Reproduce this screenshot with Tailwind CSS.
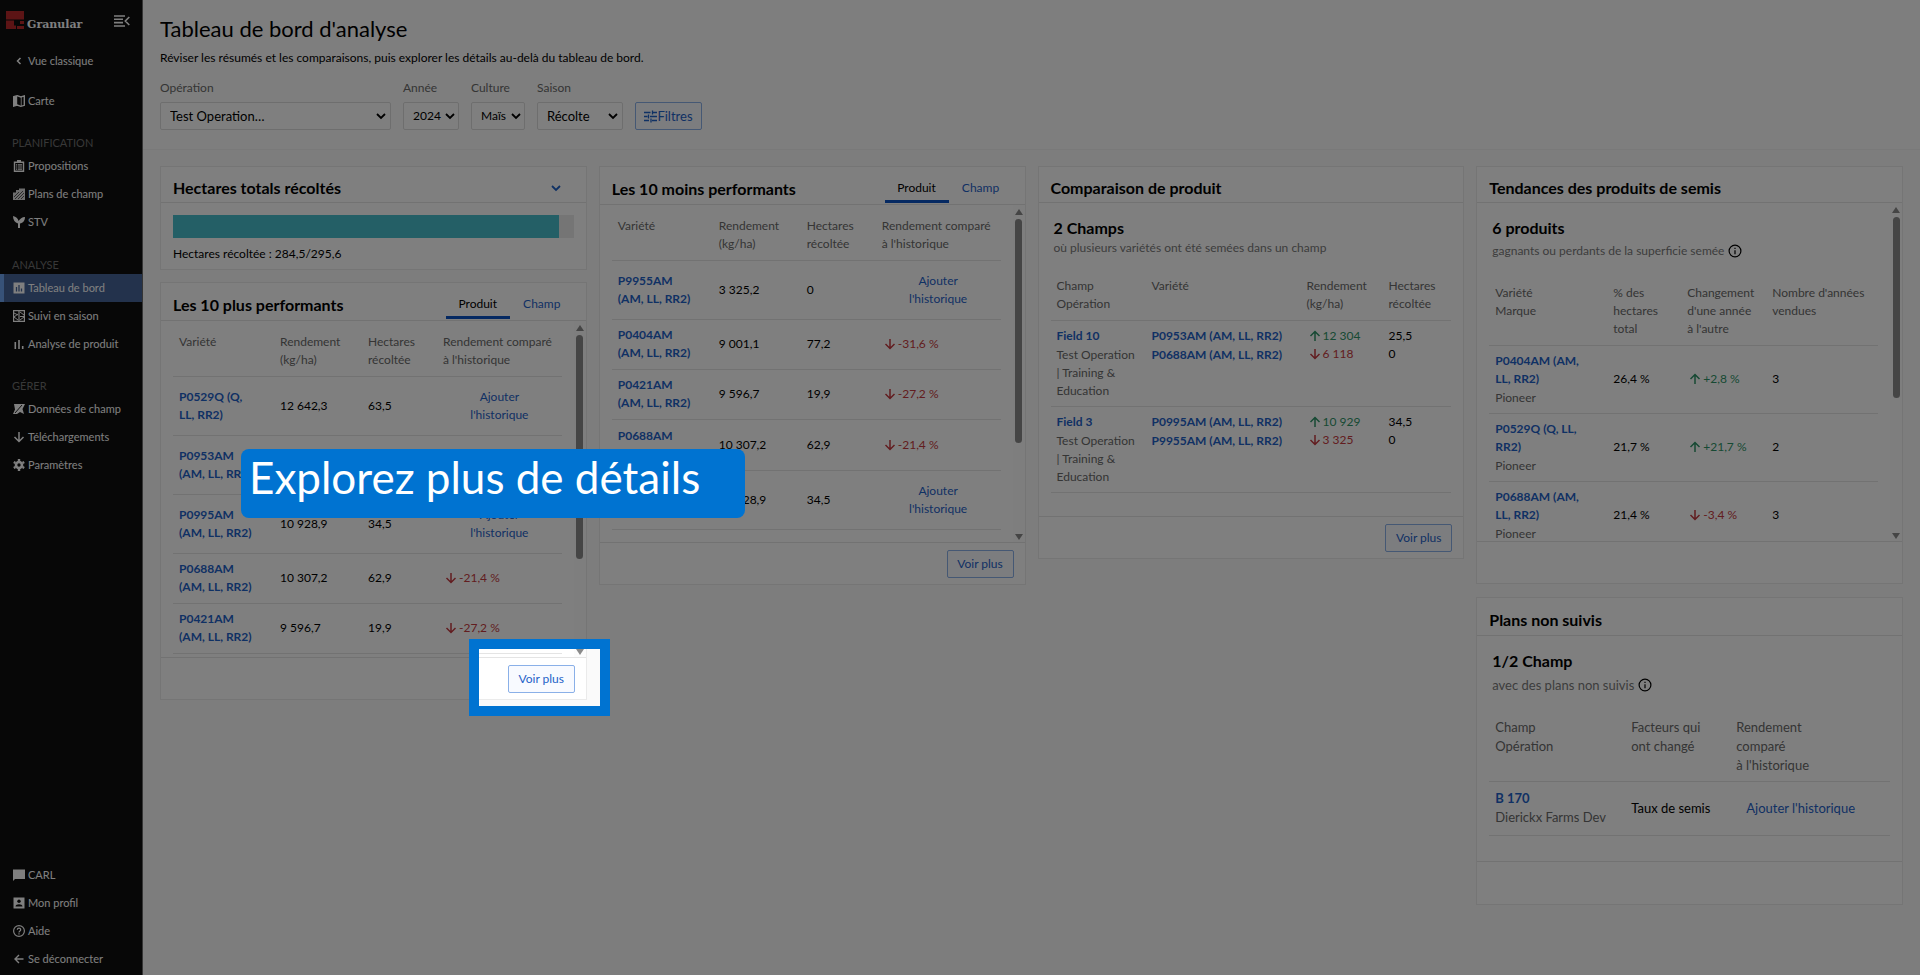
<!DOCTYPE html>
<html lang="fr">
<head>
  <meta charset="UTF-8">
  <title>Tableau de bord d'analyse</title>
  <script src="https://cdn.jsdelivr.net/npm/@tailwindcss/browser@4"></script>
</head>
<body class="bg-[#fafafa] font-['Lato','Open_Sans',sans-serif] text-[12px] leading-[18px] text-black">
  <svg class="hidden">
    <symbol id="up" viewBox="0 0 12 12"><path d="M6 11V1.5M1.5 6L6 1.5 10.500 6" fill="none" stroke="currentColor" stroke-width="1.5"/></symbol>
    <symbol id="down" viewBox="0 0 12 12"><path d="M6 1v9.500M1.500 6L6 10.500 10.500 6" fill="none" stroke="currentColor" stroke-width="1.5"/></symbol>
    <symbol id="chevron" viewBox="0 0 12 12"><path d="M2 4l4 4 4-4" fill="none" stroke="currentColor" stroke-width="1.8"/></symbol>
    <symbol id="info" viewBox="0 0 14 14"><circle cx="7" cy="7" r="5.900" fill="none" stroke="currentColor" stroke-width="1.2"/><path d="M6.400 6.200h1.200V10.200H6.400zM6.400 3.800h1.200V5H6.400z" fill="currentColor"/></symbol>
    <symbol id="tri-up" viewBox="0 0 8 6"><path d="M4 0L8 6H0z" fill="currentColor"/></symbol>
    <symbol id="tri-down" viewBox="0 0 8 6"><path d="M4 6L8 0H0z" fill="currentColor"/></symbol>
  </svg>

  <div class="relative flex min-h-screen overflow-hidden">
    <!-- Sidebar -->
    <aside class="flex w-[143px] shrink-0 flex-col border-r border-[#6a6a6a] bg-[#0e0e0e] pb-0.5 text-[11px] text-white">
      <div class="flex h-[47px] items-start justify-between pl-1.5 pr-3 pt-[11px]">
        <a href="#" class="flex items-end gap-[3px]">
          <svg class="size-[18px]" viewBox="0 0 18 18"><path d="M0 0h18v8.500H0z" fill="#b8292b"/><path d="M0 9.500h8v5h2V18H0z" fill="#b8292b"/><path d="M14 10h4v3h-4zM11 15h7v3h-7z" fill="#b8292b"/></svg>
          <span class="font-['DejaVu_Serif',serif] text-[11px] font-bold leading-2">Granular</span>
        </a>
        <button type="button" aria-label="Réduire le menu" class="mt-1">
          <svg class="h-3 w-4" viewBox="0 0 16 12"><path d="M0 1h11M0 4.300h9M0 7.600h9M0 11h11M15.300 2l-4 4 4 4" fill="none" stroke="#fff" stroke-width="1.6"/></svg>
        </button>
      </div>
      <nav>
        <a href="#" class="flex h-7 items-center gap-[3px] pl-[13px]"><svg class="size-3" viewBox="0 0 12 12"><path d="M7.500 3L4.500 6l3 3" fill="none" stroke="#fff" stroke-width="1.500"/></svg>Vue classique</a>
        <a href="#" class="mt-3 flex h-7 items-center gap-[3px] pl-[13px]"><svg class="size-3" viewBox="0 0 12 12"><path d="M.7 1.700l3.500-1 3.600 1.200 3.500-1v9.400l-3.500 1-3.600-1.200-3.500 1z" fill="none" stroke="#fff" stroke-width="1.400"/><path d="M.7 1.700l3.500-1v9.400l-3.500 1zM7.800 1.900l.8-.2v9.400l-.8.200z" fill="#fff"/></svg>Carte</a>
        <h2 class="mt-[19px] pl-3 text-[#707070]">PLANIFICATION</h2>
        <a href="#" class="flex h-7 items-center gap-[3px] pl-[13px]"><svg class="size-3" viewBox="0 0 12 12"><path d="M1.500 2.200h9v9h-9z" fill="none" stroke="#fff" stroke-width="1.400"/><path d="M4 0h4v3H4zM3 4.300h1.300v1.200H3zM5 4.300h4v1.200H5zM3 6.400h1.300v1.200H3zM5 6.400h4v1.200H5zM3 8.500h1.300v1.200H3zM5 8.500h4v1.200H5z" fill="#fff"/></svg>Propositions</a>
        <a href="#" class="flex h-7 items-center gap-[3px] pl-[13px]"><svg class="size-3" viewBox="0 0 12 12"><path d="M0 4.500h3V2h3V.500h6V12H0z" fill="#ddd"/><path d="M2 11l8-8M5 11l6-6M1 9l5-5M8 11l3-3" stroke="#333" stroke-width=".8"/></svg>Plans de champ</a>
        <a href="#" class="flex h-7 items-center gap-[3px] pl-[13px]"><svg class="size-3" viewBox="0 0 12 12"><path d="M0 0c3 .5 5 2.500 5.600 5C7 2.700 9 1 12 1c0 3.500-2 6-5 6.500V12H5V7.500C2 6.500 0 4 0 0z" fill="#fff"/></svg>STV</a>
        <h2 class="mt-5 pl-3 text-[#707070]">ANALYSE</h2>
        <a href="#" class="flex h-7 items-center gap-[3px] border-l-4 border-[#6ea4f0] bg-[#466498] pl-[9px]"><svg class="size-3" viewBox="0 0 12 12"><path d="M.5.5h11v11H.5z" fill="#fff"/><path d="M3.500 5v4.500M6 3v6.500M8.500 6.500v3" stroke="#466498" stroke-width="1.300"/></svg>Tableau de bord</a>
        <a href="#" class="flex h-7 items-center gap-[3px] pl-[13px]"><svg class="size-3" viewBox="0 0 12 12"><path d="M.6.6h10.800v10.800H.6zM6 0v12" fill="none" stroke="#fff" stroke-width="1.200"/><path d="M1 3l4 2M1 7l4-3M1 7l4 3M7 2l4 3M7 6.500h4M7 10l4-3" stroke="#fff"/></svg>Suivi en saison</a>
        <a href="#" class="flex h-7 items-center gap-[3px] pl-[13px]"><svg class="size-3" viewBox="0 0 12 12"><path d="M2.300 4v7M6 2v9M9.700 8v3" stroke="#fff" stroke-width="1.600"/></svg>Analyse de produit</a>
        <h2 class="mt-[19px] pl-3 text-[#707070]">GÉRER</h2>
        <a href="#" class="flex h-7 items-center gap-[3px] pl-[13px]"><svg class="size-3" viewBox="0 0 12 12"><path d="M1 1h11l-2.500 5 1.500 5-4-2-3 2H0l2-4.500z" fill="#fff"/><path d="M2 10l7-8" stroke="#222"/></svg>Données de champ</a>
        <a href="#" class="flex h-7 items-center gap-[3px] pl-[13px]"><svg class="size-3"><use href="#down"/></svg>Téléchargements</a>
        <a href="#" class="flex h-7 items-center gap-[3px] pl-[13px]"><svg class="size-3" viewBox="0 0 12 12"><circle cx="6" cy="6" r="3" fill="none" stroke="#fff" stroke-width="2.600"/><path d="M6 0v2M6 10v2M.8 3l1.700 1M9.500 8l1.700 1M.8 9l1.700-1M9.500 4l1.700-1" stroke="#fff" stroke-width="2.400"/></svg>Paramètres</a>
      </nav>
      <nav class="mt-auto">
        <a href="#" class="flex h-7 items-center gap-[3px] pl-[13px]"><svg class="size-3" viewBox="0 0 12 12"><path d="M0 .5h12v9.500H2L0 12z" fill="#fff"/></svg>CARL</a>
        <a href="#" class="flex h-7 items-center gap-[3px] pl-[13px]"><svg class="size-3" viewBox="0 0 12 12"><path d="M.5.5h11v11H.5z" fill="#fff"/><circle cx="6" cy="4.300" r="1.700" fill="#0e0e0e"/><path d="M2.500 9.500c0-3 7-3 7 0z" fill="#0e0e0e"/></svg>Mon profil</a>
        <a href="#" class="flex h-7 items-center gap-[3px] pl-[13px]"><svg class="size-3" viewBox="0 0 12 12"><circle cx="6" cy="6" r="5.400" fill="none" stroke="#fff" stroke-width="1.200"/><path d="M4.300 4.800c0-2.300 3.400-2.200 3.400-.1C7.700 6 6 6 6 7.500M6 8.300v1.300" fill="none" stroke="#fff" stroke-width="1.200"/></svg>Aide</a>
        <a href="#" class="flex h-7 items-center gap-[3px] pl-[13px]"><svg class="size-3" viewBox="0 0 12 12"><path d="M10.500 6H2M6 2L2 6l4 4" fill="none" stroke="#fff" stroke-width="1.400"/></svg>Se déconnecter</a>
      </nav>
    </aside>

    <main class="min-w-0 flex-1">
      <header class="border-b border-[#f2f2f2] bg-[#fdfdfd] pb-[19px] pl-[17px] pt-4">
        <h1 class="text-[22px] leading-[26px]">Tableau de bord d'analyse</h1>
        <p class="mt-[7px]">Réviser les résumés et les comparaisons, puis explorer les détails au-delà du tableau de bord.</p>
        <div class="mt-3 flex items-end gap-3">
          <div class="w-[231px]">
            <label for="operation" class="block text-[#6a6a6a]">Opération</label>
            <div class="relative mt-[5px]">
              <select id="operation" class="h-7 w-full appearance-none rounded-xs border border-[#dcdcdc] bg-white pl-[9px] text-[13px]"><option>Test Operation…</option></select>
              <svg class="pointer-events-none absolute right-1 top-2 size-3"><use href="#chevron"/></svg>
            </div>
          </div>
          <div class="w-14">
            <label for="annee" class="block text-[#6a6a6a]">Année</label>
            <div class="relative mt-[5px]">
              <select id="annee" class="h-7 w-full appearance-none rounded-xs border border-[#dcdcdc] bg-white pl-[9px]"><option>2024</option></select>
              <svg class="pointer-events-none absolute right-[3px] top-2 size-3"><use href="#chevron"/></svg>
            </div>
          </div>
          <div class="w-[54px]">
            <label for="culture" class="block text-[#6a6a6a]">Culture</label>
            <div class="relative mt-[5px]">
              <select id="culture" class="h-7 w-full appearance-none rounded-xs border border-[#dcdcdc] bg-white pl-[9px]"><option>Maïs</option></select>
              <svg class="pointer-events-none absolute right-[3px] top-2 size-3"><use href="#chevron"/></svg>
            </div>
          </div>
          <div class="w-[86px]">
            <label for="saison" class="block text-[#6a6a6a]">Saison</label>
            <div class="relative mt-[5px]">
              <select id="saison" class="h-7 w-full appearance-none rounded-xs border border-[#dcdcdc] bg-white pl-[9px] text-[13px]"><option>Récolte</option></select>
              <svg class="pointer-events-none absolute right-1 top-2 size-3"><use href="#chevron"/></svg>
            </div>
          </div>
          <button type="button" class="flex h-7 w-[67px] items-center justify-center rounded-xs border border-[#8ab0e8] bg-[#f8faff] text-[13px] text-[#1f62c8]">
            <svg class="size-[13px]" viewBox="0 0 13 13"><path d="M0 2.500h6.500M9 2.500h4M8.500.5v4M0 6.500h3.500M6 6.500h7M4.500 4.500v4M0 10.500h5M8 10.500h5M7 8.500v4" stroke="currentColor" stroke-width="1.300" fill="none"/></svg>
            Filtres
          </button>
        </div>
      </header>

      <div class="grid grid-cols-4 items-start gap-3 px-[17px] pt-4">
        <!-- Column 1 -->
        <div class="flex flex-col gap-3">
          <section class="border border-[#ebebeb] bg-white">
            <div class="flex h-9 items-center justify-between border-b border-[#e4e4e4] pl-3 pr-6 pt-1.5">
              <h2 class="text-[16px] font-bold">Hectares totals récoltés</h2>
              <button type="button" aria-label="Réduire" class="text-[#1f62c8]"><svg class="size-3"><use href="#chevron"/></svg></button>
            </div>
            <div class="px-3 pb-1.5 pt-3">
              <div class="h-[23px] bg-[#ebebeb]"><div class="h-full bg-[#48bfcd]" style="width:96.2%"></div></div>
              <p class="mt-[7px]">Hectares récoltée : 284,5/295,6</p>
            </div>
          </section>

          <section class="border border-[#ebebeb] bg-white">
            <div class="flex h-[38px] items-end justify-between border-b border-[#e4e4e4] pl-3 pr-3">
              <h2 class="pb-1.5 text-[16px] font-bold">Les 10 plus performants</h2>
              <div class="flex pb-px">
                <button type="button" class="w-16 border-b-3 border-[#0a53c4] pb-[3px]">Produit</button>
                <button type="button" class="w-16 border-b-3 border-transparent pb-[3px] text-[#1f62c8]">Champ</button>
              </div>
            </div>
            <div class="flex h-[337px] overflow-hidden border-b border-[#e4e4e4]">
              <div class="min-w-0 flex-1 px-3">
                <table class="w-full table-fixed text-left">
                  <colgroup><col class="w-[101px]"><col class="w-[88px]"><col class="w-[75px]"><col></colgroup>
                  <thead><tr class="h-[55px] border-b border-[#e4e4e4] align-top text-[#6a6a6a]">
                    <th class="px-1.5 pt-3 font-normal">Variété</th><th class="px-1.5 pt-3 font-normal">Rendement (kg/ha)</th><th class="px-1.5 pt-3 font-normal">Hectares<br>récoltée</th><th class="whitespace-nowrap px-1.5 pt-3 font-normal">Rendement comparé<br>à l'historique</th>
                  </tr></thead>
                  <tbody>
                    <tr class="h-[59px] border-b border-[#e4e4e4]"><td class="px-1.5"><a href="#" class="font-bold text-[#1f62c8]">P0529Q (Q,<br>LL, RR2)</a></td><td class="px-1.5">12 642,3</td><td class="px-1.5">63,5</td><td class="px-1.5 text-center"><a href="#" class="text-[#1f62c8]">Ajouter<br>l'historique</a></td></tr>
                    <tr class="h-[59px] border-b border-[#e4e4e4]"><td class="px-1.5"><a href="#" class="font-bold text-[#1f62c8]">P0953AM<br>(AM, LL, RR2)</a></td><td class="px-1.5"></td><td class="px-1.5"></td><td class="px-1.5"></td></tr>
                    <tr class="h-[59px] border-b border-[#e4e4e4]"><td class="px-1.5"><a href="#" class="font-bold text-[#1f62c8]">P0995AM<br>(AM, LL, RR2)</a></td><td class="px-1.5">10 928,9</td><td class="px-1.5">34,5</td><td class="px-1.5 text-center"><a href="#" class="text-[#1f62c8]">Ajouter<br>l'historique</a></td></tr>
                    <tr class="h-[50px] border-b border-[#e4e4e4]"><td class="px-1.5"><a href="#" class="font-bold text-[#1f62c8]">P0688AM<br>(AM, LL, RR2)</a></td><td class="px-1.5">10 307,2</td><td class="px-1.5">62,9</td><td class="px-2"><span class="flex items-center gap-0.5 text-[#c53a40]"><svg class="size-3"><use href="#down"/></svg>-21,4 %</span></td></tr>
                    <tr class="h-[50px] border-b border-[#e4e4e4]"><td class="px-1.5"><a href="#" class="font-bold text-[#1f62c8]">P0421AM<br>(AM, LL, RR2)</a></td><td class="px-1.5">9 596,7</td><td class="px-1.5">19,9</td><td class="px-2"><span class="flex items-center gap-0.5 text-[#c53a40]"><svg class="size-3"><use href="#down"/></svg>-27,2 %</span></td></tr>
                  </tbody>
                </table>
              </div>
              <div class="flex w-3 flex-col items-center justify-between bg-[#fcfcfc] pb-0.5 pt-1 text-[#8a8a8a]">
                <svg class="h-1.5 w-2"><use href="#tri-up"/></svg>
                <div class="mb-auto mt-1 h-56 w-[7px] rounded-full bg-[#8a8a8a]"></div>
                <svg class="h-1.5 w-2"><use href="#tri-down"/></svg>
              </div>
            </div>
            <div class="flex h-[41px] items-center justify-end pr-[11px]">
              <button type="button" class="h-7 w-[67px] rounded-xs border border-[#8ab0e8] bg-[#f8faff] text-[#1f62c8]">Voir plus</button>
            </div>
          </section>
        </div>

        <!-- Column 2 -->
        <section class="border border-[#ebebeb] bg-white">
          <div class="flex h-[38px] items-end justify-between border-b border-[#e4e4e4] pl-3 pr-3">
            <h2 class="pb-1.5 text-[16px] font-bold">Les 10 moins performants</h2>
            <div class="flex pb-px">
              <button type="button" class="w-16 border-b-3 border-[#0a53c4] pb-[3px]">Produit</button>
              <button type="button" class="w-16 border-b-3 border-transparent pb-[3px] text-[#1f62c8]">Champ</button>
            </div>
          </div>
          <div class="flex h-[338px] overflow-hidden border-b border-[#e4e4e4]">
            <div class="min-w-0 flex-1 px-3">
              <table class="w-full table-fixed text-left">
                <colgroup><col class="w-[101px]"><col class="w-[88px]"><col class="w-[75px]"><col></colgroup>
                <thead><tr class="h-[55px] border-b border-[#e4e4e4] align-top text-[#6a6a6a]">
                  <th class="px-1.5 pt-3 font-normal">Variété</th><th class="px-1.5 pt-3 font-normal">Rendement (kg/ha)</th><th class="px-1.5 pt-3 font-normal">Hectares<br>récoltée</th><th class="whitespace-nowrap px-1.5 pt-3 font-normal">Rendement comparé<br>à l'historique</th>
                </tr></thead>
                <tbody>
                  <tr class="h-[59px] border-b border-[#e4e4e4]"><td class="px-1.5"><a href="#" class="font-bold text-[#1f62c8]">P9955AM<br>(AM, LL, RR2)</a></td><td class="px-1.5">3 325,2</td><td class="px-1.5">0</td><td class="px-1.5 text-center"><a href="#" class="text-[#1f62c8]">Ajouter<br>l'historique</a></td></tr>
                  <tr class="h-[50px] border-b border-[#e4e4e4]"><td class="px-1.5"><a href="#" class="font-bold text-[#1f62c8]">P0404AM<br>(AM, LL, RR2)</a></td><td class="px-1.5">9 001,1</td><td class="px-1.5">77,2</td><td class="px-2"><span class="flex items-center gap-0.5 text-[#c53a40]"><svg class="size-3"><use href="#down"/></svg>-31,6 %</span></td></tr>
                  <tr class="h-[50px] border-b border-[#e4e4e4]"><td class="px-1.5"><a href="#" class="font-bold text-[#1f62c8]">P0421AM<br>(AM, LL, RR2)</a></td><td class="px-1.5">9 596,7</td><td class="px-1.5">19,9</td><td class="px-2"><span class="flex items-center gap-0.5 text-[#c53a40]"><svg class="size-3"><use href="#down"/></svg>-27,2 %</span></td></tr>
                  <tr class="h-[51px] border-b border-[#e4e4e4]"><td class="px-1.5"><a href="#" class="font-bold text-[#1f62c8]">P0688AM<br>(AM, LL, RR2)</a></td><td class="px-1.5">10 307,2</td><td class="px-1.5">62,9</td><td class="px-2"><span class="flex items-center gap-0.5 text-[#c53a40]"><svg class="size-3"><use href="#down"/></svg>-21,4 %</span></td></tr>
                  <tr class="h-[59px] border-b border-[#e4e4e4]"><td class="px-1.5"></td><td class="px-1.5">10 928,9</td><td class="px-1.5">34,5</td><td class="px-1.5 text-center"><a href="#" class="text-[#1f62c8]">Ajouter<br>l'historique</a></td></tr>
                </tbody>
              </table>
            </div>
            <div class="flex w-3 flex-col items-center justify-between bg-[#fcfcfc] pb-0.5 pt-1 text-[#8a8a8a]">
              <svg class="h-1.5 w-2"><use href="#tri-up"/></svg>
              <div class="mb-auto mt-1 h-56 w-[7px] rounded-full bg-[#8a8a8a]"></div>
              <svg class="h-1.5 w-2"><use href="#tri-down"/></svg>
            </div>
          </div>
          <div class="flex h-[41px] items-center justify-end pr-[11px]">
            <button type="button" class="h-7 w-[67px] rounded-xs border border-[#8ab0e8] bg-[#f8faff] text-[#1f62c8]">Voir plus</button>
          </div>
        </section>

        <!-- Column 3 -->
        <section class="border border-[#ebebeb] bg-white">
          <div class="flex h-9 items-center border-b border-[#e4e4e4] pl-3 pt-1.5">
            <h2 class="text-[16px] font-bold">Comparaison de produit</h2>
          </div>
          <div class="h-[314px] border-b border-[#e4e4e4] px-3 pt-4">
            <h3 class="pl-[3px] text-[16px] font-bold">2 Champs</h3>
            <p class="mt-0.5 pl-[3px] text-[#7a7a7a]">où plusieurs variétés ont été semées dans un champ</p>
            <table class="mt-[9px] w-full table-fixed text-left">
              <colgroup><col class="w-[95px]"><col class="w-[155px]"><col class="w-[82px]"><col></colgroup>
              <thead><tr class="h-[54px] border-b border-[#e4e4e4] align-top text-[#6a6a6a]">
                <th class="px-1.5 pt-[11px] font-normal">Champ<br>Opération</th><th class="px-1.5 pt-[11px] font-normal">Variété</th><th class="px-1.5 pt-[11px] font-normal">Rendement (kg/ha)</th><th class="px-1.5 pt-[11px] font-normal">Hectares<br>récoltée</th>
              </tr></thead>
              <tbody>
                <tr class="h-[86px] border-b border-[#e4e4e4] align-top">
                  <td class="whitespace-nowrap px-1.5 pt-1.5 text-[#6a6a6a]"><a href="#" class="mb-px block font-bold text-[#1f62c8]">Field 10</a>Test Operation<br>| Training &amp;<br>Education</td>
                  <td class="whitespace-nowrap px-1.5 pt-1.5 font-bold text-[#1f62c8]"><a href="#" class="mb-px block">P0953AM (AM, LL, RR2)</a><a href="#" class="block">P0688AM (AM, LL, RR2)</a></td>
                  <td class="px-2 pt-1.5"><span class="flex items-center gap-0.5 text-[#2f9468]"><svg class="size-3"><use href="#up"/></svg>12 304</span><span class="flex items-center gap-0.5 text-[#c53a40]"><svg class="size-3"><use href="#down"/></svg>6 118</span></td>
                  <td class="px-1.5 pt-1.5">25,5<br>0</td>
                </tr>
                <tr class="h-[86px] border-b border-[#e4e4e4] align-top">
                  <td class="whitespace-nowrap px-1.5 pt-1.5 text-[#6a6a6a]"><a href="#" class="mb-px block font-bold text-[#1f62c8]">Field 3</a>Test Operation<br>| Training &amp;<br>Education</td>
                  <td class="whitespace-nowrap px-1.5 pt-1.5 font-bold text-[#1f62c8]"><a href="#" class="mb-px block">P0995AM (AM, LL, RR2)</a><a href="#" class="block">P9955AM (AM, LL, RR2)</a></td>
                  <td class="px-2 pt-1.5"><span class="flex items-center gap-0.5 text-[#2f9468]"><svg class="size-3"><use href="#up"/></svg>10 929</span><span class="flex items-center gap-0.5 text-[#c53a40]"><svg class="size-3"><use href="#down"/></svg>3 325</span></td>
                  <td class="px-1.5 pt-1.5">34,5<br>0</td>
                </tr>
              </tbody>
            </table>
          </div>
          <div class="flex h-[41px] items-center justify-end pr-[11px]">
            <button type="button" class="h-7 w-[67px] rounded-xs border border-[#8ab0e8] bg-[#f8faff] text-[#1f62c8]">Voir plus</button>
          </div>
        </section>

        <!-- Column 4 -->
        <div class="flex flex-col gap-[13px]">
          <section class="border border-[#ebebeb] bg-white">
            <div class="flex h-9 items-center border-b border-[#e4e4e4] pl-3 pt-1.5">
              <h2 class="text-[16px] font-bold">Tendances des produits de semis</h2>
            </div>
            <div class="flex h-[339px] overflow-hidden border-b border-[#e4e4e4]">
              <div class="min-w-0 flex-1 px-3 pt-4">
                <h3 class="pl-[3px] text-[16px] font-bold">6 produits</h3>
                <p class="mt-[5px] flex items-center gap-1 pl-[3px] text-[#7a7a7a]">gagnants ou perdants de la superficie semée <svg class="size-3.5 text-black"><use href="#info"/></svg></p>
                <table class="mt-3 w-full table-fixed text-left">
                  <colgroup><col class="w-[118px]"><col class="w-[74px]"><col class="w-[85px]"><col></colgroup>
                  <thead><tr class="h-[73px] border-b border-[#e4e4e4] align-top text-[#6a6a6a]">
                    <th class="px-1.5 pt-3 font-normal">Variété<br>Marque</th><th class="px-1.5 pt-3 font-normal">% des<br>hectares<br>total</th><th class="whitespace-nowrap px-1.5 pt-3 font-normal">Changement<br>d'une année<br>à l'autre</th><th class="whitespace-nowrap px-1.5 pt-3 font-normal">Nombre d'années<br>vendues</th>
                  </tr></thead>
                  <tbody>
                    <tr class="h-[68px] border-b border-[#e4e4e4]"><td class="px-1.5 text-[#6a6a6a]"><a href="#" class="mb-px block font-bold text-[#1f62c8]">P0404AM (AM,<br>LL, RR2)</a>Pioneer</td><td class="px-1.5">26,4 %</td><td class="px-2"><span class="flex items-center gap-0.5 text-[#2f9468]"><svg class="size-3"><use href="#up"/></svg>+2,8 %</span></td><td class="px-1.5">3</td></tr>
                    <tr class="h-[68px] border-b border-[#e4e4e4]"><td class="px-1.5 text-[#6a6a6a]"><a href="#" class="mb-px block font-bold text-[#1f62c8]">P0529Q (Q, LL,<br>RR2)</a>Pioneer</td><td class="px-1.5">21,7 %</td><td class="px-2"><span class="flex items-center gap-0.5 text-[#2f9468]"><svg class="size-3"><use href="#up"/></svg>+21,7 %</span></td><td class="px-1.5">2</td></tr>
                    <tr class="h-[68px] border-b border-[#e4e4e4]"><td class="px-1.5 text-[#6a6a6a]"><a href="#" class="mb-px block font-bold text-[#1f62c8]">P0688AM (AM,<br>LL, RR2)</a>Pioneer</td><td class="px-1.5">21,4 %</td><td class="px-2"><span class="flex items-center gap-0.5 text-[#c53a40]"><svg class="size-3"><use href="#down"/></svg>-3,4 %</span></td><td class="px-1.5">3</td></tr>
                  </tbody>
                </table>
              </div>
              <div class="flex w-3 flex-col items-center justify-between bg-[#fcfcfc] pb-0.5 pt-1 text-[#8a8a8a]">
                <svg class="h-1.5 w-2"><use href="#tri-up"/></svg>
                <div class="mb-auto mt-1 h-[181px] w-[7px] rounded-full bg-[#8a8a8a]"></div>
                <svg class="h-1.5 w-2"><use href="#tri-down"/></svg>
              </div>
            </div>
            <div class="h-[41px]"></div>
          </section>

          <section class="border border-[#ebebeb] bg-white">
            <div class="flex h-[38px] items-center border-b border-[#e4e4e4] pl-3 pt-1.5">
              <h2 class="text-[16px] font-bold">Plans non suivis</h2>
            </div>
            <div class="h-[226px] border-b border-[#e4e4e4] px-3 pt-4">
              <h3 class="pl-[3px] text-[16px] font-bold">1/2 Champ</h3>
              <p class="mt-1.5 flex items-center gap-1 pl-[3px] text-[13px] text-[#7a7a7a]">avec des plans non suivis <svg class="size-3.5 text-black"><use href="#info"/></svg></p>
              <table class="mt-3 w-full table-fixed text-left text-[13px] leading-[19px]">
                <colgroup><col class="w-[136px]"><col class="w-[105px]"><col></colgroup>
                <thead><tr class="h-[75px] border-b border-[#e4e4e4] align-top text-[#6a6a6a]">
                  <th class="px-1.5 pt-3 font-normal">Champ<br>Opération</th><th class="px-1.5 pt-3 font-normal">Facteurs qui<br>ont changé</th><th class="px-1.5 pt-3 font-normal">Rendement<br>comparé<br>à l'historique</th>
                </tr></thead>
                <tbody>
                  <tr class="h-[54px] border-b border-[#e4e4e4]"><td class="whitespace-nowrap px-1.5 text-[#6a6a6a]"><a href="#" class="block font-bold text-[#1f62c8]">B 170</a>Dierickx Farms Dev</td><td class="whitespace-nowrap px-1.5">Taux de semis</td><td class="px-4"><a href="#" class="text-[#1f62c8]">Ajouter l'historique</a></td></tr>
                </tbody>
              </table>
            </div>
            <div class="h-[42px]"></div>
          </section>
        </div>
      </div>
    </main>

    <!-- Tour step: dimmed page with a spotlight on the button -->
    <div class="absolute left-[469px] top-[639px] h-[77px] w-[141px] border-[10px] border-[#0073d1] shadow-[0_0_0_2000px_rgba(0,0,0,0.5)]"></div>
    <div class="absolute left-[241px] top-[449px] flex h-[69px] w-[504px] items-start rounded-lg bg-[#0073d1] pl-2 text-[44px] leading-[56px] text-white">Explorez plus de détails</div>
  </div>
</body>
</html>
